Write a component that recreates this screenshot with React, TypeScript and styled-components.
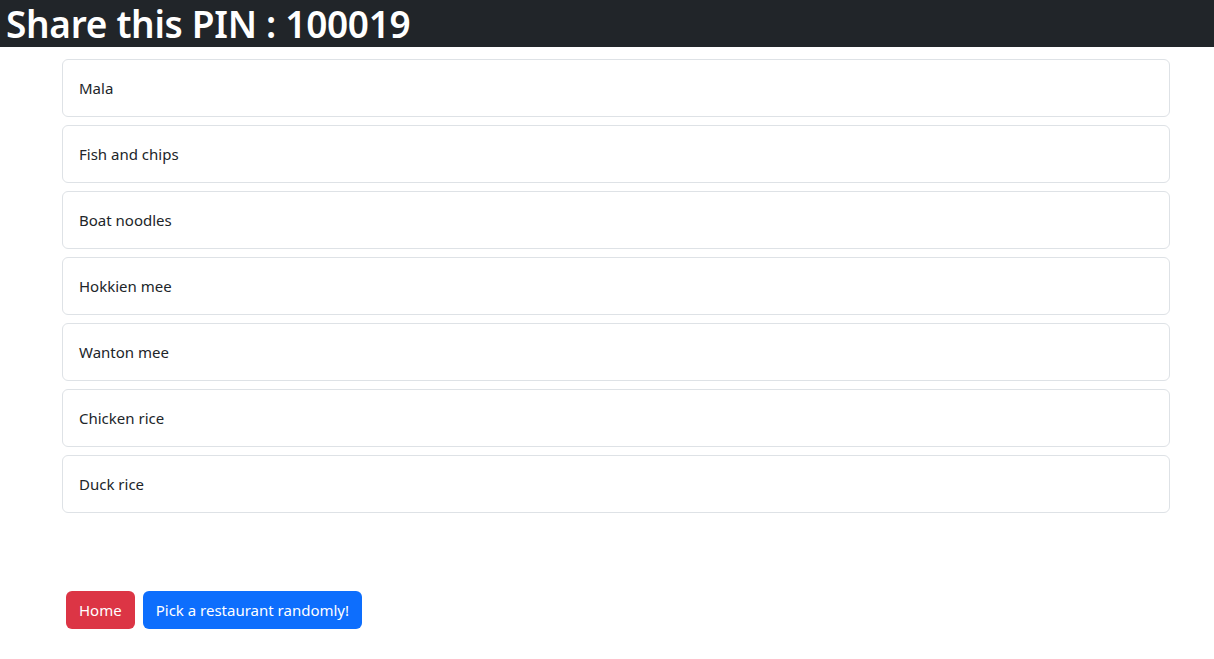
import React from "react";
import styled, { createGlobalStyle } from "styled-components";

const GlobalStyle = createGlobalStyle`
  * { box-sizing: border-box; }
  body {
    margin: 0;
    background: #fff;
    color: #212529;
    font-family: "Noto Sans", "Open Sans", sans-serif;
    font-size: 16px;
    line-height: 1.5;
  }
`;

const Header = styled.header`
  background: #212529;
  height: 47px;
  display: flex;
  align-items: center;
  padding-left: 6px;
  overflow: visible;
`;

const Title = styled.h1`
  margin: 0;
  color: #fff;
  font-size: 37px;
  font-weight: 600;
  line-height: 47px;
  letter-spacing: -0.3px;
  white-space: nowrap;
`;

const Main = styled.main`
  padding: 12px 44px 0 62px;
`;

const List = styled.div`
  display: flex;
  flex-direction: column;
  gap: 8px;
`;

const Card = styled.div`
  border: 1px solid #dee2e6;
  border-radius: 6px;
  padding: 16px;
  line-height: 24px;
  font-size: 15px;
`;

const Actions = styled.div`
  display: flex;
  gap: 8px;
  margin: 78px 0 0 4px;
`;

const Button = styled.button<{ $variant: "danger" | "primary" }>`
  height: 38px;
  padding: 6px 12px;
  border: 1px solid transparent;
  border-radius: 6px;
  font-family: inherit;
  font-size: 15px;
  line-height: 24px;
  color: #fff;
  background: ${(p) => (p.$variant === "danger" ? "#dc3545" : "#0d6efd")};
  cursor: pointer;
`;

const dishes = [
  "Mala",
  "Fish and chips",
  "Boat noodles",
  "Hokkien mee",
  "Wanton mee",
  "Chicken rice",
  "Duck rice",
];

export default function App() {
  return (
    <>
      <GlobalStyle />
      <Header>
        <Title>Share this PIN : 100019</Title>
      </Header>
      <Main>
        <List>
          {dishes.map((d) => (
            <Card key={d}>{d}</Card>
          ))}
        </List>
        <Actions>
          <Button $variant="danger">Home</Button>
          <Button $variant="primary">Pick a restaurant randomly!</Button>
        </Actions>
      </Main>
    </>
  );
}
